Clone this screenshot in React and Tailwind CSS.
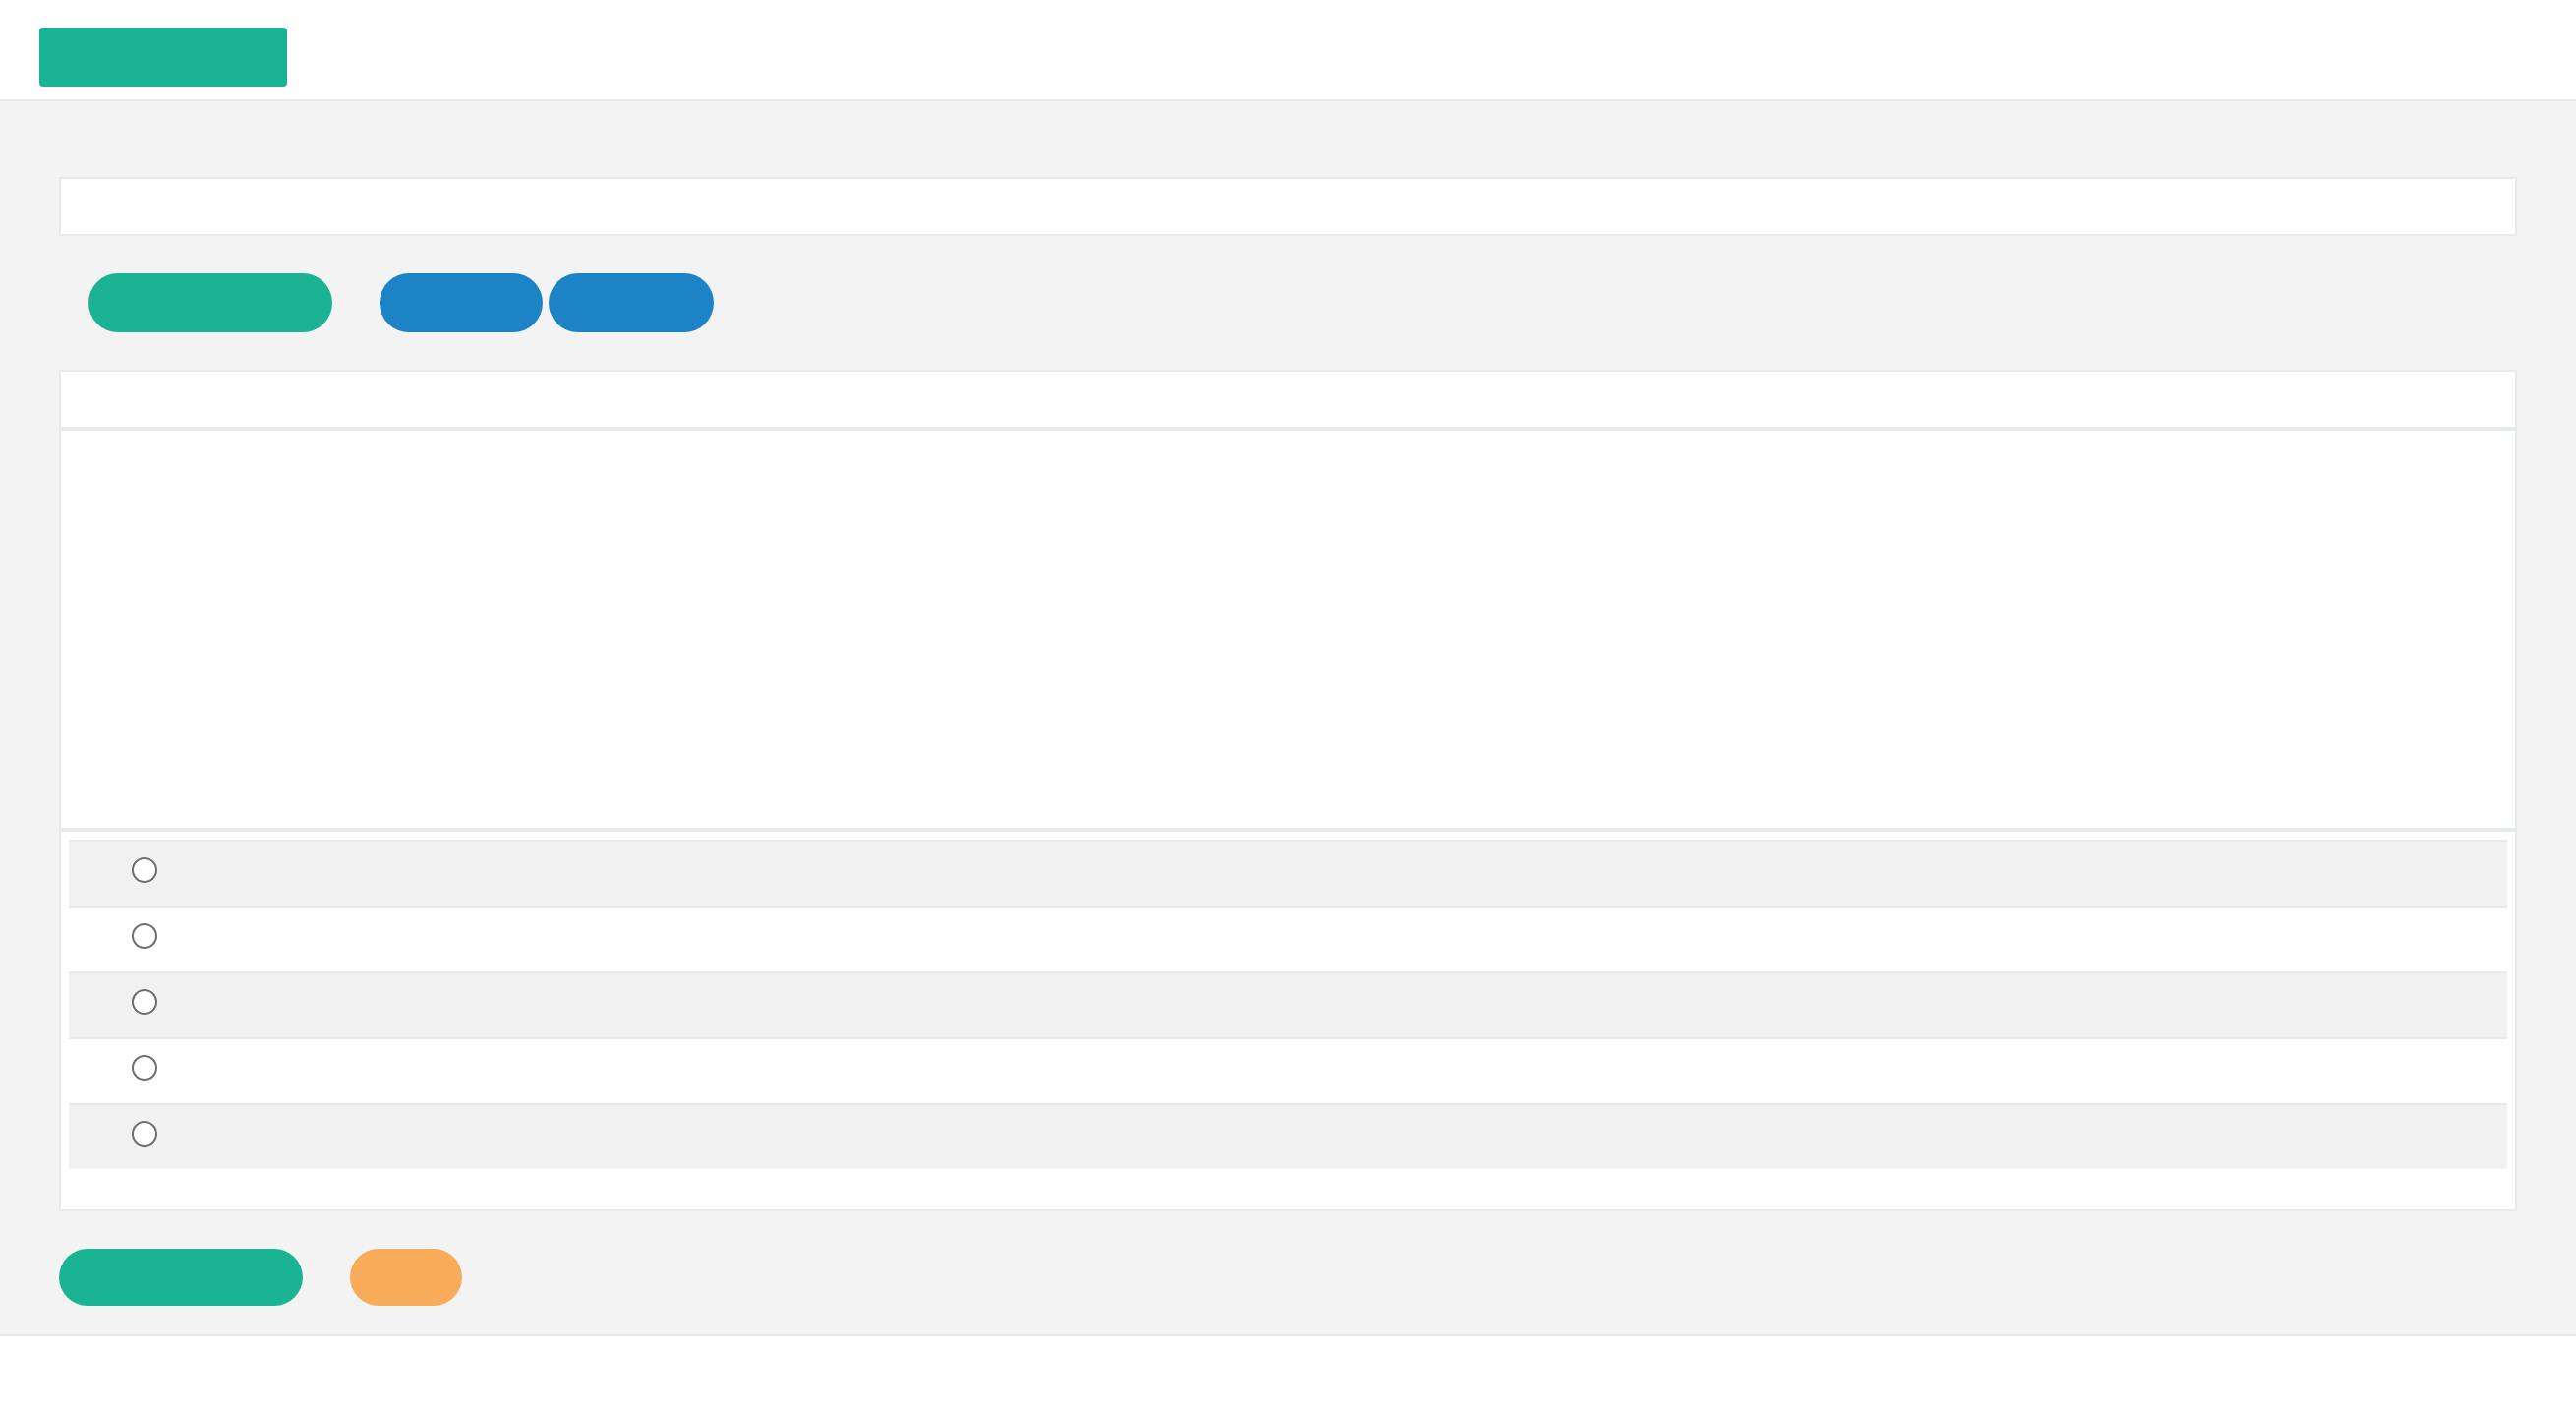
export default function App() {
  const rows = [0, 1, 2, 3, 4];
  return (
    <div className="min-h-screen bg-white" style={{ fontFamily: '"Open Sans", sans-serif' }}>
      <header className="h-[103px] border-b-2 border-[#e7eaec] bg-white pl-[40px] pt-[28px]">
        <button className="block h-[60px] w-[252px] rounded-[4px] bg-[#1ab394]" />
      </header>
      <main className="border-b-2 border-[#e7eaec] bg-[#f3f3f3] px-[60px] pt-[77px] pb-[29px]">
        <div className="h-[60px] border-2 border-[#e7eaec] bg-white" />
        <div className="mt-[38px] flex items-center pl-[30px]">
          <button className="h-[60px] w-[248px] rounded-full bg-[#1ab394]" />
          <button className="ml-[48px] h-[60px] w-[166px] rounded-full bg-[#1c84c6]" />
          <button className="ml-[6px] h-[60px] w-[168px] rounded-full bg-[#1c84c6]" />
        </div>
        <div className="mt-[38px] border-2 border-[#e7eaec] bg-white">
          <div className="h-[58px] border-b-2 border-[#e7eaec]" />
          <div className="h-[408px] border-y-2 border-[#e7eaec]" />
          <div className="border-t-2 border-[#e7eaec] px-[8px] pt-[8px] pb-[41px]">
            {rows.map((i) => (
              <div
                key={i}
                className={`h-[67px] border-t-2 border-[#e7eaec] pl-[64px] pt-[16px] ${i % 2 === 0 ? 'bg-[#f1f1f1]' : 'bg-white'}`}
              >
                <span className="block h-[26px] w-[26px] rounded-full border-2 border-[#6e6e6e] bg-white" />
              </div>
            ))}
          </div>
        </div>
        <div className="mt-[38px] flex items-center">
          <button className="h-[58px] w-[248px] rounded-full bg-[#1ab394]" />
          <button className="ml-[48px] h-[58px] w-[114px] rounded-full bg-[#f8ac59]" />
        </div>
      </main>
    </div>
  );
}
